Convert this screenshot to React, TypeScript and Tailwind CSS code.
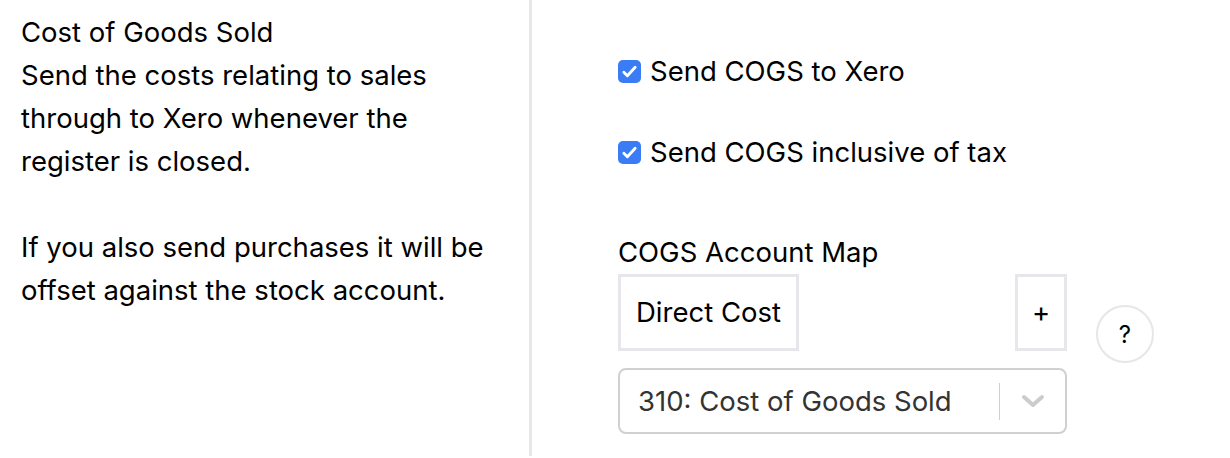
import { useState } from "react";

function Check({ checked, onChange }: { checked: boolean; onChange: () => void }) {
  return (
    <button
      onClick={onChange}
      className={`w-[23px] h-[23px] rounded-[5px] flex items-center justify-center shrink-0 ${checked ? "bg-[#3a7bf6]" : "bg-white border-2 border-[#b8b8b8]"}`}
    >
      {checked && (
        <svg width="17" height="17" viewBox="0 0 24 24" fill="none" stroke="white" strokeWidth="4" strokeLinecap="round" strokeLinejoin="round">
          <path d="M4 13l5 5L20 6" />
        </svg>
      )}
    </button>
  );
}

export default function App() {
  const [sendCogs, setSendCogs] = useState(true);
  const [inclTax, setInclTax] = useState(true);

  return (
    <div className="flex w-[1230px] h-[458px] bg-white text-black text-[27.5px] leading-[43px]" style={{ fontFamily: "Inter, 'Liberation Sans', sans-serif" }}>
      {/* ── Left description ── */}
      <div className="w-[529px] shrink-0 pl-[21px] pt-[11px]">
        <p>Cost of Goods Sold</p>
        <p className="w-[472px]">
          Send the costs relating to sales through to Xero whenever the register is closed.
        </p>
        <p className="mt-[43px] w-[472px]">
          If you also send purchases it will be offset against the stock account.
        </p>
      </div>

      <div className="w-[3px] h-[456px] bg-[#e6e6eb] shrink-0" />

      {/* ── Settings ── */}
      <div className="pl-[86px] pt-[50px]">
        <label className="flex items-center gap-[9px] cursor-pointer">
          <Check checked={sendCogs} onChange={() => setSendCogs(!sendCogs)} />
          <span>Send COGS to Xero</span>
        </label>
        <label className="flex items-center gap-[9px] cursor-pointer mt-[38px]">
          <Check checked={inclTax} onChange={() => setInclTax(!inclTax)} />
          <span>Send COGS inclusive of tax</span>
        </label>

        <p className="mt-[57px]">COGS Account Map</p>

        <div className="flex items-start">
          <div className="w-[449px]">
            <div className="flex justify-between">
              <div className="w-[181px] h-[77px] border-[3px] border-[#e6e6eb] flex items-center pl-[15px]">
                Direct Cost
              </div>
              <button className="w-[52px] h-[77px] border-[3px] border-[#e6e6eb] flex items-center justify-center">
                +
              </button>
            </div>
            <div className="mt-[17px] h-[66px] rounded-[8px] border-2 border-[#d0d0d0] flex items-center">
              <span className="flex-1 pl-[18px] text-[#333]">310: Cost of Goods Sold</span>
              <div className="w-px h-[37px] bg-[#d0d0d0]" />
              <div className="w-[65px] flex items-center justify-center">
                <svg width="24" height="14" viewBox="0 0 24 14" fill="none" stroke="#cccccc" strokeWidth="4" strokeLinecap="round" strokeLinejoin="round">
                  <path d="M3 3l9 8 9-8" />
                </svg>
              </div>
            </div>
          </div>
          <button className="ml-[29px] mt-[31px] w-[58px] h-[58px] rounded-full border-2 border-[#e6e6eb] flex items-center justify-center text-[24px]">
            ?
          </button>
        </div>
      </div>
    </div>
  );
}
